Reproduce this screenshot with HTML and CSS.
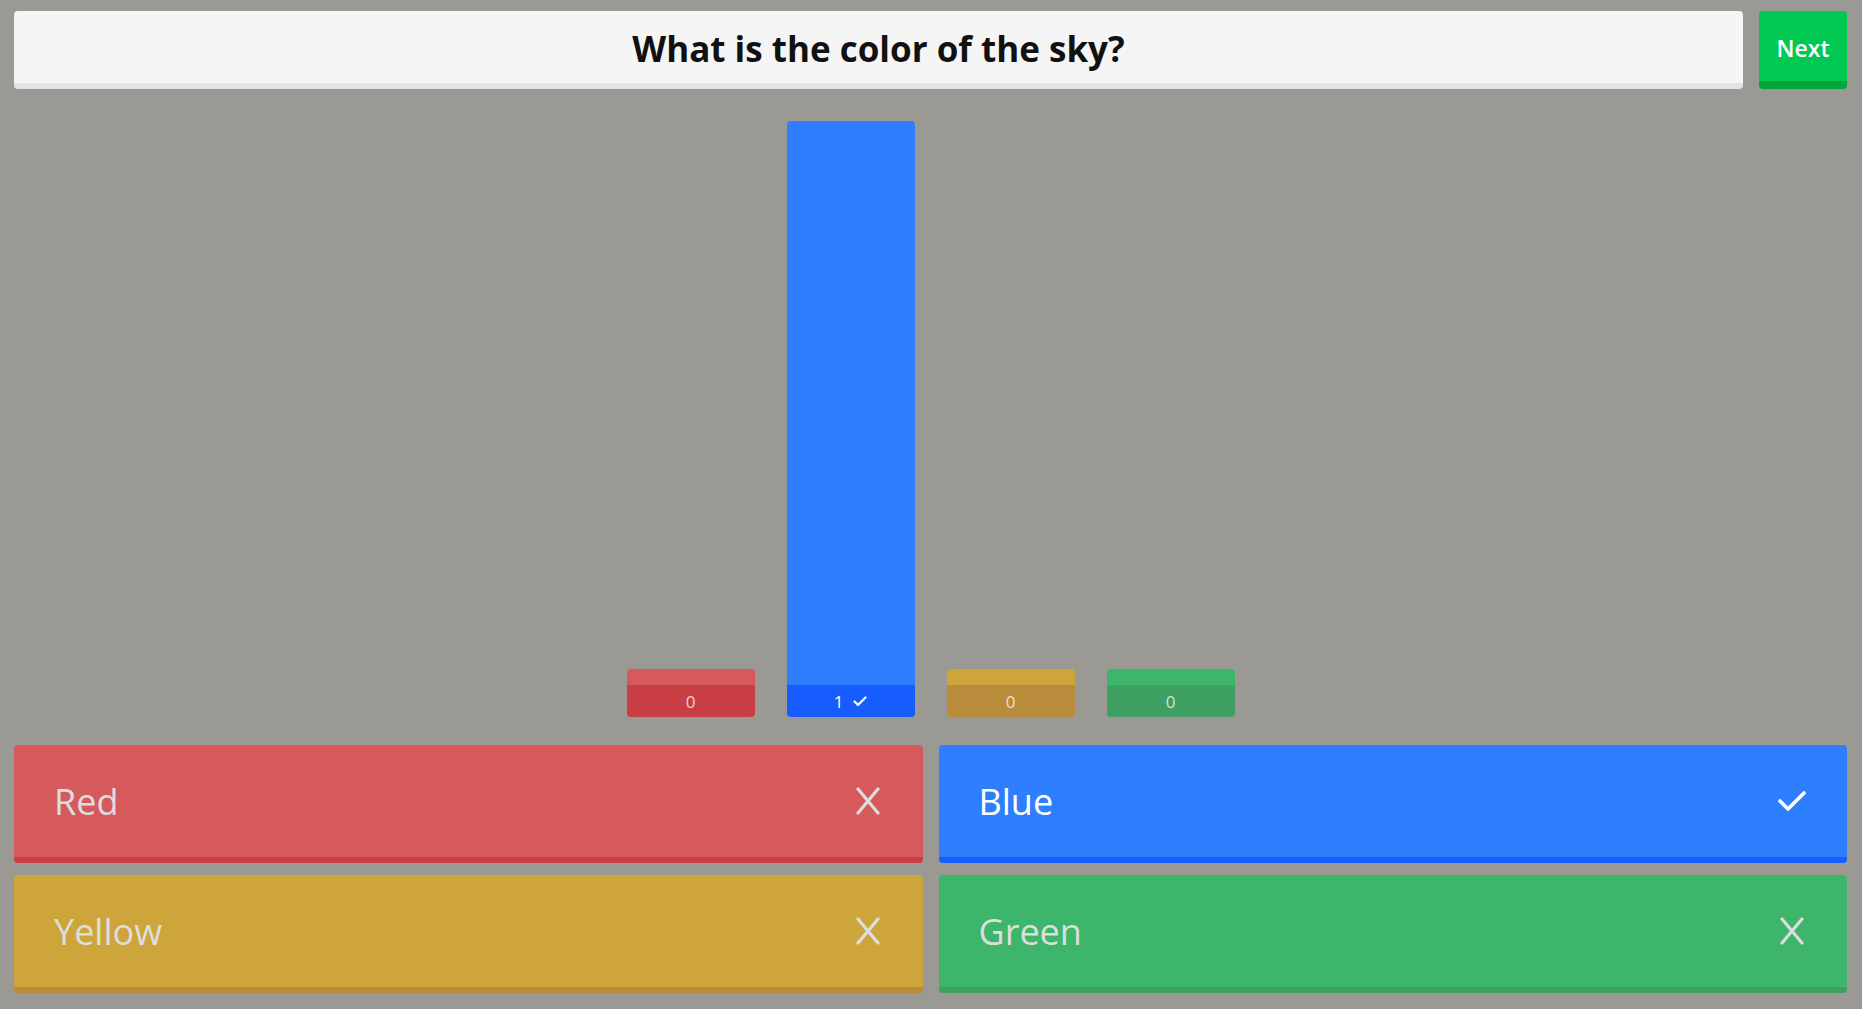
FILE: index.html
```html
<!DOCTYPE html>
<html lang="en">
<head>
  <meta charset="UTF-8">
  <title>Quiz results</title>
  <meta name="viewport" content="width=device-width,initial-scale=1">
  <link rel="stylesheet" href="styles.css">
</head>
<body>
  <header class="top">
    <div class="question">What is the color of the sky?</div>
    <button class="next" type="button">Next</button>
  </header>

  <section class="chart">
    <div class="bar red" style="height: 0%">
      <div class="fill"></div>
      <div class="count">0</div>
    </div>
    <div class="bar blue" style="height: 100%">
      <div class="fill"></div>
      <div class="count">1 <svg class="tick" width="14" height="11" viewBox="0 0 14 11"><path d="M1.5 5.5 L5 9 L12.5 1.5" /></svg></div>
    </div>
    <div class="bar yellow" style="height: 0%">
      <div class="fill"></div>
      <div class="count">0</div>
    </div>
    <div class="bar green" style="height: 0%">
      <div class="fill"></div>
      <div class="count">0</div>
    </div>
  </section>

  <section class="answers">
    <div class="answer red">
      <span>Red</span>
      <svg class="icon" width="28" height="28" viewBox="0 0 28 28"><path d="M4 2 L24 26 M24 2 L4 26" /></svg>
    </div>
    <div class="answer blue correct">
      <span>Blue</span>
      <svg class="icon" width="28" height="28" viewBox="0 0 28 28"><path d="M2 14 L10 22 L26 6" /></svg>
    </div>
    <div class="answer yellow">
      <span>Yellow</span>
      <svg class="icon" width="28" height="28" viewBox="0 0 28 28"><path d="M4 2 L24 26 M24 2 L4 26" /></svg>
    </div>
    <div class="answer green">
      <span>Green</span>
      <svg class="icon" width="28" height="28" viewBox="0 0 28 28"><path d="M4 2 L24 26 M24 2 L4 26" /></svg>
    </div>
  </section>
</body>
</html>
```

FILE: styles.css
```css
* { box-sizing: border-box; }
html, body { margin: 0; }
body { height: 100vh; padding: 11px 15px 16px 14px; background: #9a9994; font-family: "Open Sans", "Noto Sans", sans-serif; display: flex; flex-direction: column; overflow: hidden; }

.top { display: flex; gap: 16px; height: 78px; }
.question { flex: 1; display: flex; align-items: center; justify-content: center; padding-top: 2px; background: #f5f5f5; border-bottom: 6px solid #e3e3e3; border-radius: 4px; font-size: 35px; font-weight: 700; color: #111; }
.next { width: 88px; padding: 3px 0 0; background: #00c853; border: none; border-bottom: 8px solid #00a53c; border-radius: 4px; color: #fff; font-family: inherit; font-size: 23px; font-weight: 600; cursor: pointer; }

.chart { flex: 1; min-height: 0; display: flex; justify-content: center; align-items: flex-end; gap: 32px; padding: 32px 0 28px; }
.bar { width: 128px; min-height: 48px; display: flex; flex-direction: column; border-radius: 4px; overflow: hidden; }
.bar .fill { flex: 1; }
.bar .count { height: 32px; display: flex; align-items: center; justify-content: center; gap: 10px; font-size: 17px; color: rgba(255,255,255,.75); }
.tick { fill: none; stroke: #fff; stroke-width: 2.2; stroke-linecap: round; stroke-linejoin: round; }

.bar.red .fill { background: #d65a5c; }
.bar.red .count { background: #c93e45; }
.bar.blue .fill { background: #2d7ffe; }
.bar.blue .count { background: #165cff; color: #fff; }
.bar.yellow .fill { background: #cda53a; }
.bar.yellow .count { background: #b98c3c; }
.bar.green .fill { background: #3db66b; }
.bar.green .count { background: #3d9f61; }

.answers { display: grid; grid-template-columns: 1fr 1fr; grid-auto-rows: 118px; gap: 12px 16px; }
.answer { display: flex; align-items: center; justify-content: space-between; padding: 0 41px 0 40px; border-radius: 4px; border-bottom: 6px solid; font-size: 36px; color: #ddd; }
.answer .icon { fill: none; stroke: #ddd; stroke-width: 3.2; stroke-linecap: round; stroke-linejoin: round; }
.answer.correct { color: #fff; }
.answer.correct .icon { stroke: #fff; stroke-width: 3.6; }

.answer.red { background: #d65a5c; border-color: #c93e45; }
.answer.blue { background: #2d7ffe; border-color: #165cff; }
.answer.yellow { background: #cda53a; border-color: #b98c3c; }
.answer.green { background: #3db66b; border-color: #3d9f61; }
```
